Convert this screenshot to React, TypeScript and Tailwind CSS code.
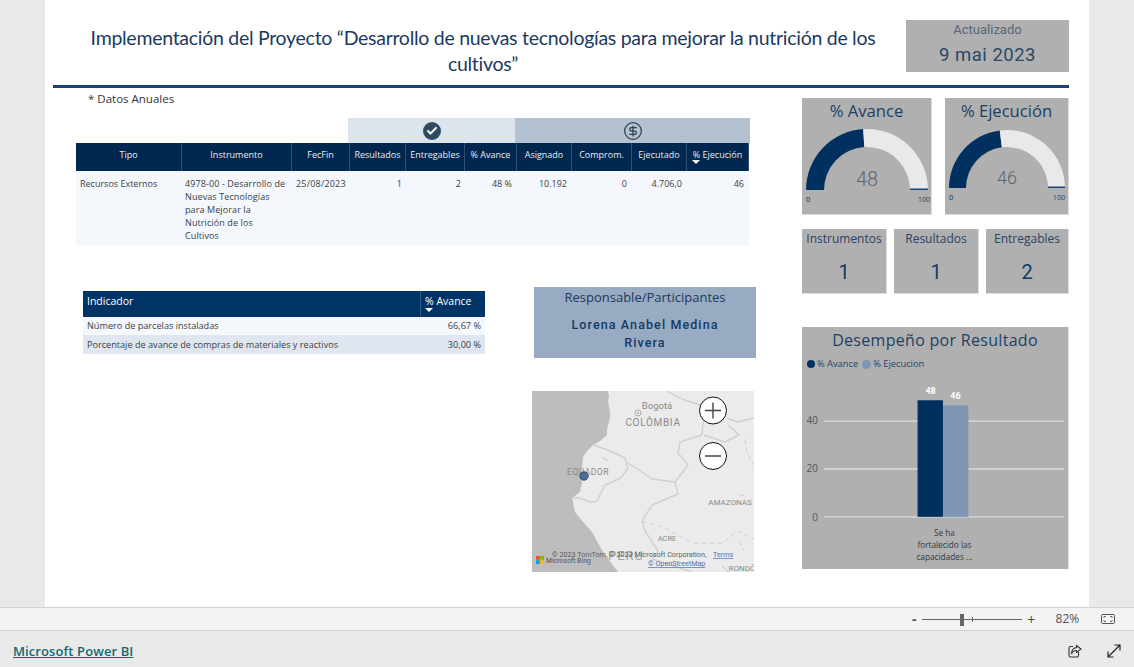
import React from 'react';
import { Check, CircleDollarSign } from 'lucide-react';

const SEGOE = "font-['Open_Sans','Noto_Sans',sans-serif]";
const DIN = "font-['Roboto','Liberation_Sans',sans-serif]";
const TABLE_COLS = 'grid-cols-[106px_110px_58px_56px_59px_52px_55px_60px_55px_62px]';

const COLS = [
  { label: 'Tipo' },
  { label: 'Instrumento' },
  { label: 'FecFin' },
  { label: 'Resultados' },
  { label: 'Entregables' },
  { label: '% Avance' },
  { label: 'Asignado' },
  { label: 'Comprom.' },
  { label: 'Ejecutado' },
  { label: '% Ejecución', sorted: true },
];

const VALUES = ['1', '2', '48 %', '10.192', '0', '4.706,0', '46'];

const polar = (cx: number, cy: number, r: number, pct: number) => {
  const a = Math.PI * (1 - pct / 100);
  return `${(cx + r * Math.cos(a)).toFixed(2)} ${(cy - r * Math.sin(a)).toFixed(2)}`;
};

const arc = (cx: number, cy: number, R: number, r: number, from: number, to: number) =>
  `M${polar(cx, cy, R, from)} A${R} ${R} 0 0 1 ${polar(cx, cy, R, to)} L${polar(cx, cy, r, to)} A${r} ${r} 0 0 0 ${polar(cx, cy, r, from)} Z`;

const SortArrow = () => (
  <span className="block w-0 h-0 border-x-[4px] border-x-transparent border-t-[4px] border-t-white" />
);

const Gauge: React.FC<{
  title: string; value: number; width: string; svgW: number; cx: number; cy: number; R: number; r: number; size: number; maxX: number; minX: number; numY: number;
}> = ({ title, value, width, svgW, cx, cy, R, r, size, maxX, minX, numY }) => (
  <div className={`${width} h-[117px] bg-[#b0b0b0] border-r border-b border-[#dcdcdc] flex flex-col items-center`}>
    <div className={`${SEGOE} text-[16.6px] leading-[22px] mt-[2px] text-[#1c3f66] whitespace-nowrap`}>{title}</div>
    <svg viewBox={`0 0 ${svgW} 90`} width={svgW} height="90" className="block">
      <path d={arc(cx, cy, R, r, 0, value)} fill="#00305f" />
      <path d={arc(cx, cy, R, r, value, 100)} fill="#e9e9e9" />
      <rect x={cx + r} y={cy - 1.5} width={R - r} height="1.5" fill="#1d4477" />
      <text x={cx} y={numY} textAnchor="middle" fontSize={size} fill="#5a6675" fontFamily="Roboto" fontWeight="300">{value}</text>
      <text x={minX} y={cy + 12} textAnchor="middle" fontSize="7.5" fill="#1c3f66" fontFamily="Roboto">0</text>
      <text x={maxX} y={cy + 12} textAnchor="middle" fontSize="7.5" fill="#44525f" fontFamily="Roboto">100</text>
    </svg>
  </div>
);

const Stat: React.FC<{ label: string; value: string; width: string }> = ({ label, value, width }) => (
  <div className={`${width} h-[65px] bg-[#b0b0b0] border-r border-b border-[#dcdcdc] flex flex-col items-center`}>
    <div className={`${SEGOE} text-[12px] leading-[16px] mt-[2px] text-[#2a4366]`}>{label}</div>
    <div className={`${DIN} text-[20px] leading-[24px] mt-[13px] text-[#123a66]`}>{value}</div>
  </div>
);

const MapSvg = () => (
  <svg viewBox="0 0 222 181" className="w-full h-full block">
    <rect width="222" height="181" fill="#ebebeb" />
    <path d="M0 0 L76 0 L77 6 L76 11 L78 20 L78 27 L75 38 L75 44 L68 50 L61 54 L55 60 L51 66 L50 78 L50 91 L48 101 L40 107 L43 121 L52 132 L60 141 L66 152 L73 164 L86 181 L0 181 Z" fill="#bdbdbd" />
    <g fill="none" stroke="#d0d0d0" strokeWidth="1.4" strokeLinejoin="round">
      <path d="M61 54 L76 59 L93 67 L96 77 L89 87 L73 94 L65 110 L58 111 L48 107 L40 107" />
      <path d="M96 72 L110 81 L120 88 L143 91 L146 103 L120 114 L110 130 L113 140 L126 160 L120 168 L160 181" />
      <path d="M135 0 L150 8 L168 14 L172 25 L170 44 L148 51 L146 62 L156 74 L143 91" />
      <path d="M195 27 L206 31 L222 27" />
      <path d="M196 34 L207 44 L193 51 L172 44" />
      <path d="M70 66 L76 70" />
    </g>
    <g fill="none" stroke="#d0d0d0" strokeWidth="1" strokeDasharray="5 3">
      <path d="M110 130 L133 137 L160 152 L190 152 L206 140 L222 148" />
      <path d="M213 48 L215 62 L222 74" />
      <path d="M207 150 L212 160" />
      <path d="M207 104 L215 105" />
    </g>
    <path d="M190 175 L197 181" fill="none" stroke="#d0d0d0" strokeWidth="1.2" />
    <circle cx="106" cy="22" r="3" fill="none" stroke="#a8a8a8" strokeWidth="1" />
    <circle cx="106" cy="22" r="1" fill="#a8a8a8" />
    <g fontFamily="Roboto" fill="#8a8a8a">
      <text x="125" y="18" textAnchor="middle" fontSize="9.5">Bogotá</text>
      <text x="121" y="35" textAnchor="middle" fontSize="10" letterSpacing="0.7">COLÔMBIA</text>
      <text x="56" y="84" textAnchor="middle" fontSize="8.5" letterSpacing="0.5">EQUADOR</text>
      <text x="198" y="114" textAnchor="middle" fontSize="8">AMAZONAS</text>
      <text x="135" y="150" textAnchor="middle" fontSize="7.5">ACRE</text>
      <text x="94" y="169" textAnchor="middle" fontSize="13" letterSpacing="1" fill="#a2a2a2">PERU</text>
      <text x="210" y="180" textAnchor="middle" fontSize="8">RONDÔ</text>
    </g>
    <circle cx="52" cy="85" r="4.2" fill="#4d6c95" stroke="#263c5c" strokeWidth="0.8" />
    <g fontFamily="Roboto" fontSize="7.2">
      <text x="20" y="166" fill="#5e5e5e">© 2023 TomTom, © 2023 Microsoft Corporation,</text>
      <text x="181" y="166" fill="#5572b0" textDecoration="underline">Terms</text>
      <text x="116" y="175" fill="#5572b0" textDecoration="underline">© OpenStreetMap</text>
      <text x="14" y="172" fill="#6a6a6a" fontWeight="500" fontSize="6.8">Microsoft Bing</text>
    </g>
    <rect x="4" y="165" width="3.8" height="3.8" fill="#f25022" />
    <rect x="8.2" y="165" width="3.8" height="3.8" fill="#7fba00" />
    <rect x="4" y="169.2" width="3.8" height="3.8" fill="#00a4ef" />
    <rect x="8.2" y="169.2" width="3.8" height="3.8" fill="#ffb900" />
    <g stroke="#111" fill="#fff" strokeWidth="1">
      <circle cx="181" cy="19.5" r="13.5" />
      <circle cx="181" cy="65" r="13.5" />
    </g>
    <path d="M173 19.5 H189 M181 11.5 V27.5 M173 65 H189" stroke="#444" strokeWidth="1.4" fill="none" />
  </svg>
);

const BarChart = () => (
  <svg viewBox="0 0 267 194" className="w-full h-[194px] block">
    <g stroke="#dadada" strokeWidth="1.3">
      <line x1="22" x2="263" y1="46" y2="46" />
      <line x1="22" x2="263" y1="94" y2="94" />
      <line x1="22" x2="263" y1="142" y2="142" />
    </g>
    <rect x="116" y="25" width="25.5" height="117" fill="#00305f" />
    <rect x="141.5" y="30" width="25.5" height="112" fill="#7f96b3" />
    <g fontFamily="Roboto" fontSize="9" fill="#ffffff" fontWeight="700" textAnchor="middle">
      <text x="129" y="19">48</text>
      <text x="154" y="24">46</text>
    </g>
    <g fontFamily="Open Sans" fontSize="10" fill="#4c5663" textAnchor="end">
      <text x="16" y="49">40</text>
      <text x="16" y="97">20</text>
      <text x="16" y="146">0</text>
    </g>
    <g fontFamily="Open Sans" fontSize="8.3" fill="#333a44" textAnchor="middle">
      <text x="143" y="161">Se ha</text>
      <text x="143" y="173">fortalecido las</text>
      <text x="143" y="185">capacidades ...</text>
    </g>
  </svg>
);

const App: React.FC = () => {
  return (
    <div className={`${SEGOE} w-[1134px] h-[667px] overflow-hidden bg-[#e9e9e9] flex flex-col`}>
      <div className="h-[607px] pl-[45px] shrink-0">
        <div className="w-[1044px] h-[607px] bg-white pl-[8px] pr-[20px]">
          {/* header */}
          <div className="flex h-[85px]">
            <h1 className="w-[800px] ml-[30px] pt-[25px] font-['Lato',sans-serif] text-[19.5px] tracking-[-0.28px] leading-[26px] text-center text-[#1b3a5f] font-normal whitespace-nowrap">
              Implementación del Proyecto “Desarrollo de nuevas tecnologías para mejorar la nutrición de los<br />cultivos”
            </h1>
            <div className={`${DIN} ml-[23px] mt-[20px] w-[163px] h-[52px] bg-[#b0b0b0] flex flex-col items-center`}>
              <div className="text-[13px] leading-[18px] mt-[1px] text-[#566779]">Actualizado</div>
              <div className="text-[18.5px] leading-[26px] mt-[3px] tracking-[0.5px] text-[#2a4766]">9 mai 2023</div>
            </div>
          </div>
          <div className="h-[3px] bg-[#1d4477]" />

          <div className="flex">
            {/* left */}
            <div className="w-[749px]">
              <div className="pl-[35px] pt-[3px] h-[30px] text-[11.5px] leading-[16px] text-[#333]">* Datos Anuales</div>
              <div className="ml-[23px] w-[674px]">
                <div className="ml-[272px] flex h-[25px]">
                  <div className="w-[167px] bg-[#dee4ec] flex items-center justify-center">
                    <span className="w-[18px] h-[18px] rounded-full bg-[#2f4a63] flex items-center justify-center">
                      <Check size={12} strokeWidth={4} className="text-white" />
                    </span>
                  </div>
                  <div className="w-[235px] bg-[#b3c1d1] flex items-center justify-center">
                    <CircleDollarSign size={20} strokeWidth={1.5} className="text-[#2f3f50]" />
                  </div>
                </div>
                <div className={`w-[673px] grid ${TABLE_COLS} text-[9px]`}>
                  {COLS.map(c => (
                    <div
                      key={c.label}
                      className="h-[28px] bg-[#00274f] border-r border-[#2f4f73] text-[#e8edf3] font-medium flex flex-col items-center pt-[5px] leading-[13px] whitespace-nowrap"
                    >
                      {c.label}
                      {c.sorted && <span className="self-start ml-[5px] -mt-[1px]"><SortArrow /></span>}
                    </div>
                  ))}
                </div>
                <div className={`w-[673px] h-[75px] bg-[#f4f7fc] grid ${TABLE_COLS} text-[9px] leading-[13px] text-[#3a3f47] pt-[6px]`}>
                  <div className="pl-[4px]">Recursos Externos</div>
                  <div className="pl-[3px] tracking-[0.1px] whitespace-nowrap">
                    4978-00 - Desarrollo de<br />Nuevas Tecnologías<br />para Mejorar la<br />Nutrición de los<br />Cultivos
                  </div>
                  <div className="pl-[4px] tracking-[0.2px]">25/08/2023</div>
                  {VALUES.map((v, i) => (
                    <div key={i} className={i < 2 ? 'text-right pr-[4px]' : 'text-right pr-[5px]'}>{v}</div>
                  ))}
                </div>
              </div>

              <div className="flex mt-[41px]">
                <div className="ml-[30px] mt-[4px] w-[402px] text-[9.15px]">
                  <div className="h-[26px] bg-[#003366] flex text-white text-[10.5px] leading-[14px]">
                    <div className="w-[338px] border-r border-[#2f5a85] pl-[4px] pt-[3px]">Indicador</div>
                    <div className="flex-1 pl-[4px] pt-[3px]">
                      % Avance
                      <span className="block"><SortArrow /></span>
                    </div>
                  </div>
                  <div className="h-[18px] bg-[#f4f7fc] flex items-center justify-between px-[4px] text-[#3a3f47]">
                    <span>Número de parcelas instaladas</span>
                    <span>66,67 %</span>
                  </div>
                  <div className="h-[19px] bg-[#dfe6ef] flex items-center justify-between px-[4px] text-[#3a3f47]">
                    <span>Porcentaje de avance de compras de materiales y reactivos</span>
                    <span>30,00 %</span>
                  </div>
                </div>
                <div className="ml-[47px] w-[224px]">
                  <div className="ml-[2px] w-[222px] h-[71px] bg-[#98abc2] flex flex-col items-center">
                    <div className="text-[13px] leading-[17px] mt-[2px] text-[#1e3a5c]">Responsable/Participantes</div>
                    <div className={`${DIN} text-[12.5px] leading-[18px] mt-[10px] font-medium tracking-[1.1px] text-center text-[#123a66] w-[170px]`}>
                      Lorena Anabel Medina Rivera
                    </div>
                  </div>
                  <div className="mt-[33px] w-[222px] h-[181px]">
                    <MapSvg />
                  </div>
                </div>
              </div>
            </div>

            {/* right */}
            <div className="w-[267px] pt-[10px]">
              <div className="flex gap-[13px]">
                <Gauge title="% Avance" value={48} width="w-[130px]" svgW={129} cx={65} cy={68} R={61} r={43} size={20} minX={6} maxX={122} numY={64} />
                <Gauge title="% Ejecución" value={46} width="w-[124px]" svgW={123} cx={62} cy={66} R={58} r={41} size={18} minX={6} maxX={114} numY={62} />
              </div>
              <div className="flex gap-[7px] mt-[14px]">
                <Stat label="Instrumentos" value="1" width="w-[85px]" />
                <Stat label="Resultados" value="1" width="w-[85px]" />
                <Stat label="Entregables" value="2" width="w-[83px]" />
              </div>
              <div className="mt-[33px] h-[242px] w-[267px] bg-[#b0b0b0] border-r border-[#dcdcdc]">
                <div className="text-[16px] leading-[22px] pt-[2px] h-[26px] text-center text-[#1c3f66] tracking-[0.3px]">Desempeño por Resultado</div>
                <div className="h-[22px] flex items-center pl-[5px] text-[9.3px] text-[#2a4366]">
                  <span className="w-[8px] h-[8px] rounded-full bg-[#00305f] mr-[2px]" />
                  <span>% Avance</span>
                  <span className="w-[9px] h-[9px] rounded-full bg-[#7f96b3] ml-[4px] mr-[2px]" />
                  <span>% Ejecucion</span>
                </div>
                <BarChart />
              </div>
            </div>
          </div>
        </div>
      </div>

      {/* zoom bar */}
      <div className="h-[24px] shrink-0 bg-[#f3f3f3] border-t border-b border-[#d2d2d2] flex items-center text-[#555]">
        <span className="ml-[912px] w-[10px] text-[14px] leading-none font-bold">-</span>
        <div className="relative w-[100px] h-[1px] bg-[#666]">
          <span className="absolute left-[38px] -top-[5px] w-[4px] h-[12px] bg-[#666]" />
          <span className="absolute left-[50px] -top-[2px] w-[1px] h-[5px] bg-[#666]" />
        </div>
        <span className="ml-[5px] text-[15px] leading-none">+</span>
        <span className="ml-[20px] text-[12px]">82%</span>
        <svg width="14" height="10" viewBox="0 0 14 10" fill="none" className="ml-[22px]">
          <rect x="0.5" y="0.5" width="13" height="9" rx="1" stroke="#555" />
          <path d="M3 4V2.5H5M9 2.5H11V4M11 6V7.5H9M5 7.5H3V6" stroke="#555" strokeWidth="0.8" />
        </svg>
      </div>

      {/* footer */}
      <div className="flex-1 flex items-center pl-[13px] pr-[13px] pt-[5px] justify-between">
        <a className="text-[13px] font-semibold underline text-[#116a70] tracking-[0.1px]">Microsoft Power BI</a>
        <div className="flex items-center gap-[25px] -mt-[1px]">
          <svg width="14" height="14" viewBox="0 0 14 14" fill="none" stroke="#333" strokeWidth="1.1">
            <path d="M5 2.5H2.5A1.5 1.5 0 0 0 1 4v7.5A1.5 1.5 0 0 0 2.5 13H9a1.5 1.5 0 0 0 1.5-1.5V8" />
            <path d="M8.5 1.5 13 5 8.5 8.5V6.5C6 6.5 4.5 7.5 3.5 10c0-4 2-6 5-6.5Z" />
          </svg>
          <svg width="14" height="14" viewBox="0 0 14 14" fill="none" stroke="#222" strokeWidth="1.2">
            <path d="M1 13 13 1M7.5 1H13V6.5M1 7.5V13H6.5" />
          </svg>
        </div>
      </div>
    </div>
  );
};

export default App;
